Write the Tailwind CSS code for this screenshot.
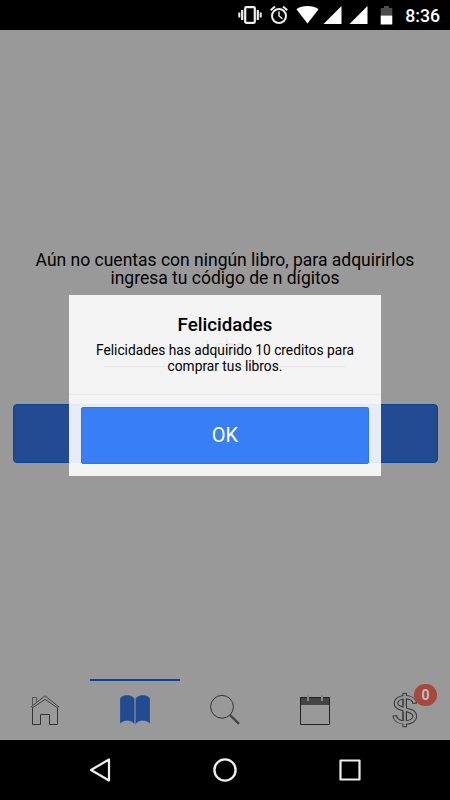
<!DOCTYPE html>
<html lang="es">

<head>
    <meta charset="UTF-8">
    <meta name="viewport" content="width=device-width, initial-scale=1.0">
    <title>Mis libros</title>
    <script src="https://cdn.jsdelivr.net/npm/@tailwindcss/browser@4"></script>
</head>

<body class="font-['Roboto',sans-serif] bg-black">
    <div class="relative flex flex-col w-[450px] h-[800px] overflow-hidden text-black">
        <!-- status bar -->
        <header class="flex items-center justify-end h-[30px] pr-[10px] bg-black text-white">
            <svg class="w-[24px] h-[20px] mr-[8px]" viewBox="0 0 24 20" fill="none" stroke="#eee">
                <rect x="7.2" y="2.2" width="9.6" height="15.6" rx="1" stroke-width="2.2" />
                <path d="M4.2 5v10M19.8 5v10" stroke-width="2.2" />
                <path d="M1.3 7.5v5M22.7 7.5v5" stroke-width="2" />
            </svg>
            <svg class="w-[18px] h-[20px] mr-[8px]" viewBox="0 0 18 20" fill="none" stroke="#eee">
                <circle cx="9" cy="11" r="7" stroke-width="2" />
                <path d="M9 6.5V11l3.4 2.6" stroke-width="1.5" />
                <path d="M.7 5.2L5 1.6M17.3 5.2L13 1.6" stroke-width="2" />
            </svg>
            <svg class="w-[23px] h-[20px] mr-[4px]" viewBox="0 0 23 20" fill="#fff">
                <path d="M.4 4.2C6-.2 17-.2 22.6 4.2L11.5 18.6z" />
            </svg>
            <svg class="w-[19px] h-[20px] mr-[7px]" viewBox="0 0 19 20" fill="#fff">
                <path d="M18.5 1v18H.5z" />
            </svg>
            <svg class="w-[19px] h-[20px] mr-[12px]" viewBox="0 0 19 20" fill="#fff">
                <path d="M18.5 1v18H.5z" />
            </svg>
            <svg class="w-[13px] h-[20px] mr-[12px]" viewBox="0 0 13 20">
                <path d="M4 1h5v2h3.3v7.5H.7V3H4z" fill="#4d4d4d" />
                <path d="M.7 10.5h11.6V19.5H.7z" fill="#fff" />
            </svg>
            <span class="text-[17.7px] leading-[20px] font-medium pt-[2px]">8:36</span>
        </header>

        <!-- content -->
        <main class="flex flex-col items-center h-[649px] pt-[221px] bg-[#999]">
            <p class="text-[17.5px] leading-[18px] text-center w-[400px]">Aún no cuentas con ningún libro, para adquirirlos<br>ingresa tu código de n dígitos</p>
            <div class="flex items-end justify-center w-[242px] h-[80px] pb-[7px] border-b border-[#333] text-[18px] leading-[24px] text-[#222]">Lobo</div>
            <button class="w-[425px] h-[59px] mt-[37px] rounded-[4px] border border-[#0c4298] bg-[#224b92] text-[20px] text-[#999]">Agregar</button>
        </main>

        <!-- tabs -->
        <nav class="grid grid-cols-5 h-[61px] bg-[#999]">
            <a class="flex justify-center pt-[16px]">
                <svg class="w-[30px] h-[30px]" viewBox="0 0 30 30" fill="none" stroke="#333" stroke-width="1">
                    <path d="M.8 12.2L15 .8l14.2 11.4M2.2 13L15 4.4 27.8 13" stroke="#444" />
                    <path d="M2.5 12.5v17h8v-10h9v10h8v-17" />
                    <path d="M2.5 10.5v-8h4v4.2" stroke="#555" />
                </svg>
            </a>
            <a class="flex justify-center border-t-2 border-[#0c4298] pt-[14px]">
                <svg class="w-[30px] h-[30px]" viewBox="0 0 30 30">
                    <path d="M14.2 3.5h1.6V29.5h-1.6z" fill="#7c8592" />
                    <g fill="#224b92" stroke="#0c4298" stroke-width=".5">
                        <path d="M.3 3.5C3-.6 11.3-.6 14 3.5V28.300C11 24.300 4 24.300.3 28z" />
                        <path d="M29.700 3.500C27-.6 18.700-.6 16 3.500V28.300C19 24.300 26 24.300 29.700 28z" />
                    </g>
                </svg>
            </a>
            <a class="flex justify-center pt-[16px]">
                <svg class="w-[30px] h-[30px]" viewBox="0 0 30 30" fill="none" stroke="#333">
                    <circle cx="12" cy="11.8" r="11.4" stroke-width="1" />
                    <path d="M20 20l9 8.8" stroke="#444" stroke-width="2.4" />
                </svg>
            </a>
            <a class="flex justify-center pt-[16px]">
                <svg class="w-[30px] h-[30px]" viewBox="0 0 30 30" fill="none">
                    <path d="M0 2h30v8H0z" fill="#444" />
                    <path d="M.5 2.5h29v27H.5z" stroke="#222" />
                    <path d="M8 0v6M22 0v6" stroke="#888" stroke-width="2" />
                </svg>
            </a>
            <a class="relative flex justify-center pt-[13px]">
                <!-- dollar sign drawn as an outline: wide dark stroke under a narrower grey one -->
                <svg class="w-[26px] h-[36px]" viewBox="0 0 26 36" fill="none">
                    <g stroke="#383838" stroke-width="4.6">
                        <path d="M12.7 .8v34.4" />
                        <path d="M22.8 11.8C22 3 4 3.4 4 11.5c0 7.5 18.8 4.3 18.8 12.7 0 8.3-19.3 8.7-20-.9" />
                    </g>
                    <g stroke="#999" stroke-width="2.5">
                        <path d="M12.7 1.8v32.4" />
                        <path d="M22.7 10.8C21.5 3 4 3.4 4 11.5c0 7.5 18.8 4.3 18.8 12.7 0 8.3-19 8.7-20 .1" />
                    </g>
                    <path d="M11.2 6.5v7.8M14.3 6.5v7.8M11.2 20v9M14.3 20v9" stroke="#383838" stroke-width=".9" />
                </svg>
                <span class="absolute left-[54px] top-[5px] flex items-center justify-center w-[23px] h-[22px] rounded-full bg-[#a5493f] text-[14px] font-bold text-[#c4bcbc]">0</span>
            </a>
        </nav>

        <!-- android buttons -->
        <footer class="flex items-center justify-between h-[60px] bg-black px-[88px]">
            <svg class="w-[24px] h-[26px]" viewBox="0 0 24 26" fill="none" stroke="#eee" stroke-width="2.2" stroke-linejoin="round">
                <path d="M21 2.5v21L3 13z" />
            </svg>
            <svg class="w-[26px] h-[26px]" viewBox="0 0 26 26" fill="none" stroke="#eee" stroke-width="2.4">
                <circle cx="13" cy="13" r="10.6" />
            </svg>
            <svg class="w-[24px] h-[26px]" viewBox="0 0 24 26" fill="none" stroke="#eee" stroke-width="2.2" stroke-linejoin="round">
                <path d="M2.5 3.5h19v19h-19z" />
            </svg>
        </footer>

        <!-- popup -->
        <div class="absolute left-[69px] top-[295px] flex flex-col w-[312px] h-[181px] bg-white/89">
            <div class="h-[100px] pt-[19px] border-b border-[#eaeaea] text-center">
                <h3 class="text-[18.7px] leading-[22px] font-medium">Felicidades</h3>
                <p class="mt-[6px] text-[13.75px] leading-[16px]">Felicidades has adquirido 10 creditos para<br>comprar tus libros.</p>
            </div>
            <button class="w-[288px] h-[57px] mt-[12px] mx-auto pb-[2px] rounded-[2px] border border-[#2a74f5] bg-[#387ef5] text-[20px] text-white">OK</button>
        </div>
    </div>
</body>

</html>
